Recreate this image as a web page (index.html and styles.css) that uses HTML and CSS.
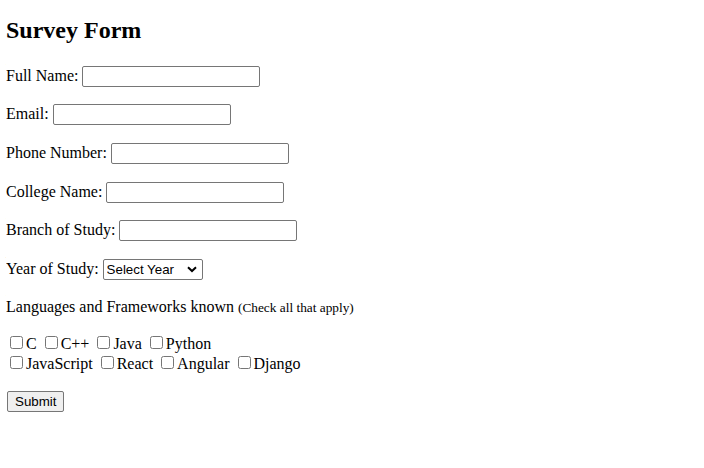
FILE: index.html
```html
<!DOCTYPE html>
<html>
<head>
<meta charset="utf-8">
<link rel="stylesheet" href="styles.css">
</head>
<body>
<h2 class="title">Survey Form</h2>
<form class="survey">
<p class="row"><label>Full Name: </label><input class="field" type="text"></p>
<p class="row"><label>Email: </label><input class="field" type="email"></p>
<p class="row"><label>Phone Number: </label><input class="field" type="tel"></p>
<p class="row"><label>College Name: </label><input class="field" type="text"></p>
<p class="row"><label>Branch of Study: </label><input class="field" type="text"></p>
<p class="row"><label>Year of Study: </label><select class="pick"><option>Select Year</option><option>1st Year</option><option>2nd Year</option><option>3rd Year</option><option>4th Year</option></select></p>
<p class="row">Languages and Frameworks known <small class="hint">(Check all that apply)</small></p>
<div class="checks">
<label><input class="box" type="checkbox">C</label>
<label><input class="box" type="checkbox">C++</label>
<label><input class="box" type="checkbox">Java</label>
<label><input class="box" type="checkbox">Python</label><br>
<label><input class="box" type="checkbox">JavaScript</label>
<label><input class="box" type="checkbox">React</label>
<label><input class="box" type="checkbox">Angular</label>
<label><input class="box" type="checkbox">Django</label>
</div>
<p class="row"><button class="submit" type="submit">Submit</button></p>
</form>
</body>
</html>
```
FILE: styles.css
```css
body {
  margin: 6px;
  font-family: "Liberation Serif", serif;
  font-size: 16px;
  color: #000;
  background: #fff;
}
.title {
  margin: 11px 0 21.5px;
  font-size: 24px;
}
.row {
  margin: 17.7px 0;
}
.field, .pick, .submit {
  font-family: "Liberation Sans", sans-serif;
  font-size: 13.33px;
  color: #000;
  box-sizing: border-box;
  border: 1px solid #767676;
  border-radius: 2px;
}
.field {
  width: 178px;
  height: 21px;
  padding: 1px 2px;
  background: #fff;
}
.pick {
  appearance: none;
  -webkit-appearance: none;
  width: 100px;
  height: 21px;
  padding: 0 18px 0 3px;
  background: #fff url("data:image/svg+xml;utf8,<svg xmlns='http://www.w3.org/2000/svg' width='10' height='7' viewBox='0 0 10 7'><path d='M1 1.2 L5 5 L9 1.2' fill='none' stroke='black' stroke-width='2'/></svg>") no-repeat right 5px center;
}
.hint {
  font-size: 13.33px;
}
.box {
  width: 13px;
  height: 13px;
  margin: 3px 3px 3px 4px;
}
.submit {
  height: 21px;
  padding: 1px 7px;
  margin-left: 1px;
  background: #efefef;
}
```
